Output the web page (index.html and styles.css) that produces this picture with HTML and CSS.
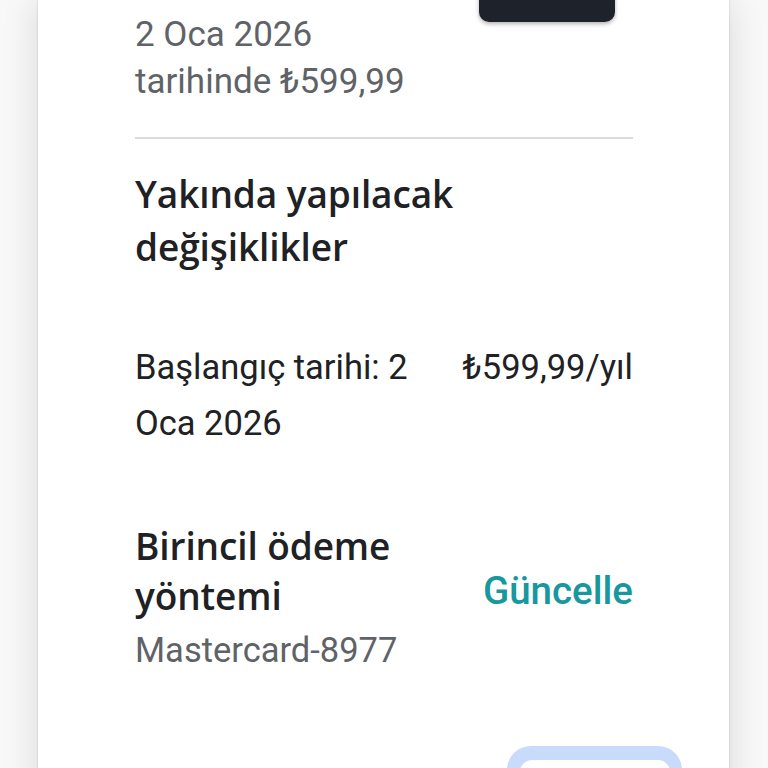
FILE: index.html
```html
<!DOCTYPE html>
<html lang="tr">
<head>
<meta charset="utf-8">
<title>Abonelik</title>
<link rel="stylesheet" href="styles.css">
</head>
<body>
<div class="card">
  <div class="top-row">
    <div class="top-text">2 Oca 2026<br>tarihinde ₺599,99</div>
    <div class="dark-btn"></div>
  </div>
  <div class="divider"></div>
  <h2 class="heading first">Yakında yapılacak değişiklikler</h2>
  <div class="change-row">
    <div class="change-date">Başlangıç tarihi: 2 Oca 2026</div>
    <div class="change-price">₺599,99/yıl</div>
  </div>
  <div class="pay-row">
    <div class="pay-info">
      <h2 class="heading second">Birincil ödeme yöntemi</h2>
      <div class="pay-card">Mastercard-8977</div>
    </div>
    <div class="update">Güncelle</div>
  </div>
  <div class="btn-row">
    <div class="focus-ring"><div class="outline-btn"></div></div>
  </div>
</div>
</body>
</html>
```

FILE: styles.css
```css
html, body {
  margin: 0;
  padding: 0;
  height: 768px;
  overflow: hidden;
}
body {
  background: #f8f8f8;
  font-family: Roboto, "Liberation Sans", sans-serif;
}
.card {
  margin-left: 38px;
  width: 691px;
  min-height: 900px;
  background: #fff;
  box-shadow: 0 0 2px rgba(0,0,0,0.18), 0 0 34px rgba(0,0,0,0.13);
  padding: 0 96px 0 97px;
  box-sizing: border-box;
}
.top-row {
  display: flex;
  justify-content: space-between;
  align-items: flex-start;
  padding-top: 11px;
}
.top-text {
  font-size: 35px;
  line-height: 47px;
  color: #5f6368;
}
.dark-btn {
  width: 136px;
  height: 60px;
  margin-top: -49px;
  margin-right: 18px;
  background: #1e222a;
  border-radius: 10px;
  box-shadow: 0 2px 4px rgba(0,0,0,0.3);
}
.divider {
  margin-top: 32px;
  height: 2px;
  background: #dadce0;
}
.heading {
  margin: 0;
  font-family: "Open Sans", sans-serif;
  font-weight: 600;
  font-size: 37px;
  color: #202124;
  letter-spacing: -0.1px;
}
.heading.first {
  margin-top: 28px;
  line-height: 53px;
  width: 360px;
}
.change-row {
  display: flex;
  justify-content: space-between;
  margin-top: 66px;
  font-size: 34.5px;
  line-height: 56px;
  color: #202124;
}
.change-date {
  width: 290px;
}
.pay-row {
  display: flex;
  justify-content: space-between;
  align-items: center;
  margin-top: 70px;
}
.heading.second {
  line-height: 50px;
  width: 300px;
}
.pay-card {
  font-size: 34.5px;
  line-height: 46px;
  color: #5f6368;
  margin-top: 6px;
}
.update {
  font-size: 38.5px;
  font-weight: 500;
  color: #17979e;
  margin-top: -14px;
}
.btn-row {
  display: flex;
  margin-top: 73px;
  padding-left: 372px;
}
.focus-ring {
  width: 175px;
  height: 80px;
  box-sizing: border-box;
  padding: 14px 12px 0 13px;
  background: #c8dbfb;
  border-radius: 24px;
  flex: none;
}
.outline-btn {
  height: 100%;
  background: #fff;
  border-radius: 12px 12px 0 0;
}
```
